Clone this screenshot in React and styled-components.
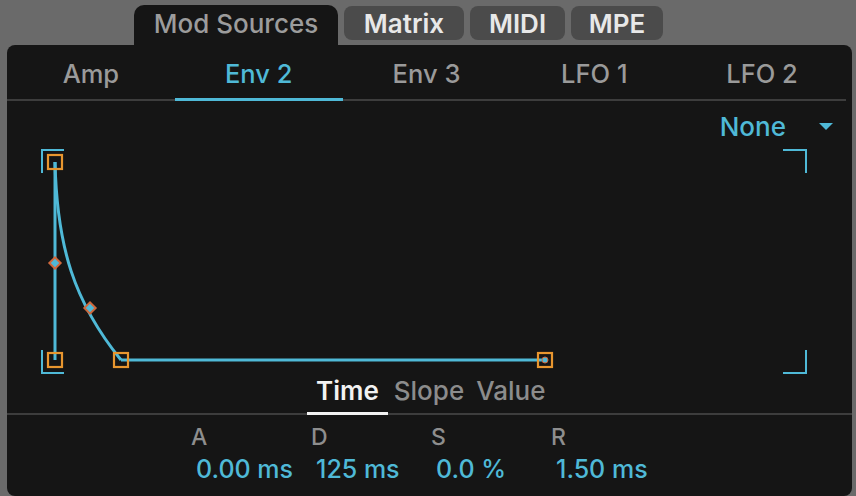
import React, { useState } from "react";
import styled, { createGlobalStyle } from "styled-components";

const BLUE = "#4fb9d7";
const ORANGE = "#e8962f";
const RUST = "#d0683c";

const GlobalStyle = createGlobalStyle`
  html, body {
    margin: 0;
    padding: 0;
    background: #6a6a6a;
    font-family: Inter, "Noto Sans", "Liberation Sans", sans-serif;
  }
`;

const Window = styled.div`
  width: 856px;
  height: 496px;
  box-sizing: border-box;
  padding: 0 4px 0 7px;
  display: flex;
  flex-direction: column;
  overflow: hidden;
`;

const TabBar = styled.div`
  height: 45px;
  display: flex;
  align-items: flex-end;
  gap: 6px;
  padding-left: 127px;
`;

const TopTab = styled.div`
  box-sizing: border-box;
  width: ${(p) => p.w}px;
  height: ${(p) => (p.active ? 40 : 34)}px;
  margin-bottom: ${(p) => (p.active ? 0 : 5)}px;
  display: flex;
  align-items: center;
  justify-content: center;
  border-radius: ${(p) => (p.active ? "10px 10px 0 0" : "8px")};
  background: ${(p) => (p.active ? "#151515" : "#4b4b4b")};
  color: ${(p) => (p.active ? "#9c9c9c" : "#e8e8e8")};
  font-size: 26px;
  font-weight: ${(p) => (p.active ? 500 : 600)};
  padding-bottom: ${(p) => (p.active ? 4 : 0)}px;
`;

const Panel = styled.div`
  flex: 1;
  background: #151515;
  border-radius: 8px;
  display: flex;
  flex-direction: column;
`;

const SubTabRow = styled.div`
  display: flex;
  height: 54px;
  margin-right: 6px;
  border-bottom: 2px solid #3d3d3d;
`;

const SubTab = styled.div`
  flex: 1;
  display: flex;
  align-items: center;
  justify-content: center;
  font-size: 25.5px;
  font-weight: 500;
  color: ${(p) => (p.active ? BLUE : "#9a9a9a")};
  border-bottom: 3px solid ${(p) => (p.active ? BLUE : "transparent")};
  margin-bottom: -2px;
  padding-top: 4px;
`;

const GraphArea = styled.div`
  display: flex;
  flex-direction: column;
`;

const DropdownRow = styled.div`
  height: 46px;
  display: flex;
  align-items: center;
  justify-content: flex-end;
  gap: 33px;
  padding: 4px 19px 0 0;
  box-sizing: border-box;
`;

const DropLabel = styled.span`
  color: ${BLUE};
  font-size: 26px;
  font-weight: 500;
`;

const Caret = styled.span`
  width: 0;
  height: 0;
  border-left: 7px solid transparent;
  border-right: 7px solid transparent;
  border-top: 7px solid ${BLUE};
`;

const Canvas = styled.svg`
  display: block;
  width: 845px;
  height: 230px;
`;

const ViewTabRow = styled.div`
  height: 36px;
  display: flex;
  align-items: stretch;
  padding-left: 300px;
  border-bottom: 2px solid #3d3d3d;
`;

const ViewTab = styled.div`
  display: flex;
  align-items: center;
  padding: 0 ${(p) => (p.active ? 9 : 6)}px 8px;
  font-size: 26px;
  font-weight: ${(p) => (p.active ? 600 : 500)};
  color: ${(p) => (p.active ? "#f2f2f2" : "#8c8c8c")};
  border-bottom: 3px solid ${(p) => (p.active ? "#f2f2f2" : "transparent")};
  margin-bottom: -2px;
`;

const ParamGrid = styled.div`
  display: grid;
  grid-template-columns: repeat(4, 120px);
  padding: 8px 0 0 184px;
`;

const Param = styled.div`
  display: flex;
  flex-direction: column;
  gap: 3px;
`;

const ParamLabel = styled.span`
  color: #8e8e8e;
  font-size: 23px;
  font-weight: 500;
`;

const ParamValue = styled.span`
  color: ${BLUE};
  font-size: 25px;
  font-weight: 500;
  padding-left: 5px;
  white-space: nowrap;
`;

// page coords -> svg coords: x - 7, y - 145
const P = (x, y) => [x - 7, y - 145];

const Handle = ({ x, y, dot }) => {
  const [cx, cy] = P(x, y);
  return (
    <g>
      <rect x={cx - 7} y={cy - 7} width="14" height="14" fill="none" stroke={ORANGE} strokeWidth="2.2" />
      {dot && <circle cx={cx} cy={cy} r="3" fill={BLUE} stroke={RUST} strokeWidth="1" />}
    </g>
  );
};

const Diamond = ({ x, y }) => {
  const [cx, cy] = P(x, y);
  return (
    <rect
      x={cx - 4}
      y={cy - 4}
      width="8"
      height="8"
      fill={BLUE}
      stroke={RUST}
      strokeWidth="2"
      transform={`rotate(45 ${cx} ${cy})`}
    />
  );
};

const Bracket = ({ d }) => <path d={d} fill="none" stroke={BLUE} strokeWidth="2" />;

const Envelope = () => {
  const line = (pts) => pts.map((p, i) => (i ? "L" : "M") + P(...p).join(",")).join(" ");
  const [a0x, a0y] = P(55, 160);
  const [c1x, c1y] = P(57, 245);
  const [c2x, c2y] = P(74, 300);
  const [d1x, d1y] = P(121, 358);
  return (
    <Canvas viewBox="0 0 845 230">
      <Bracket d={line([[42, 171], [42, 148], [64, 148]])} />
      <Bracket d={line([[42, 348], [42, 371], [64, 371]])} />
      <Bracket d={line([[783, 148], [806, 148], [806, 171]])} />
      <Bracket d={line([[806, 348], [806, 371], [783, 371]])} />
      <path d={line([[55, 358], [55, 160]])} stroke={BLUE} strokeWidth="3" fill="none" />
      <path
        d={`M${a0x},${a0y} C${c1x},${c1y} ${c2x},${c2y} ${d1x},${d1y}`}
        stroke={BLUE}
        strokeWidth="3"
        fill="none"
      />
      <path d={line([[121, 358], [545, 358]])} stroke={BLUE} strokeWidth="3" fill="none" />
      <Diamond x={55} y={261} />
      <Diamond x={90} y={306} />
      <Handle x={55} y={160} />
      <Handle x={55} y={358} />
      <Handle x={121} y={358} />
      <Handle x={545} y={358} dot />
    </Canvas>
  );
};

const topTabs = [
  { name: "Mod Sources", w: 204 },
  { name: "Matrix", w: 120 },
  { name: "MIDI", w: 95 },
  { name: "MPE", w: 92 },
];
const sources = ["Amp", "Env 2", "Env 3", "LFO 1", "LFO 2"];
const views = ["Time", "Slope", "Value"];
const params = [
  { label: "A", value: "0.00 ms" },
  { label: "D", value: "125 ms" },
  { label: "S", value: "0.0 %" },
  { label: "R", value: "1.50 ms" },
];

const App = () => {
  const [top, setTop] = useState("Mod Sources");
  const [source, setSource] = useState("Env 2");
  const [view, setView] = useState("Time");

  return (
    <Window>
      <GlobalStyle />
      <TabBar>
        {topTabs.map((t) => (
          <TopTab key={t.name} w={t.w} active={top === t.name} onClick={() => setTop(t.name)}>
            {t.name}
          </TopTab>
        ))}
      </TabBar>
      <Panel>
        <SubTabRow>
          {sources.map((s) => (
            <SubTab key={s} active={source === s} onClick={() => setSource(s)}>
              {s}
            </SubTab>
          ))}
        </SubTabRow>
        <GraphArea>
          <DropdownRow>
            <DropLabel>None</DropLabel>
            <Caret />
          </DropdownRow>
          <Envelope />
        </GraphArea>
        <ViewTabRow>
          {views.map((v) => (
            <ViewTab key={v} active={view === v} onClick={() => setView(v)}>
              {v}
            </ViewTab>
          ))}
        </ViewTabRow>
        <ParamGrid>
          {params.map((p) => (
            <Param key={p.label}>
              <ParamLabel>{p.label}</ParamLabel>
              <ParamValue>{p.value}</ParamValue>
            </Param>
          ))}
        </ParamGrid>
      </Panel>
    </Window>
  );
};

export default App;
